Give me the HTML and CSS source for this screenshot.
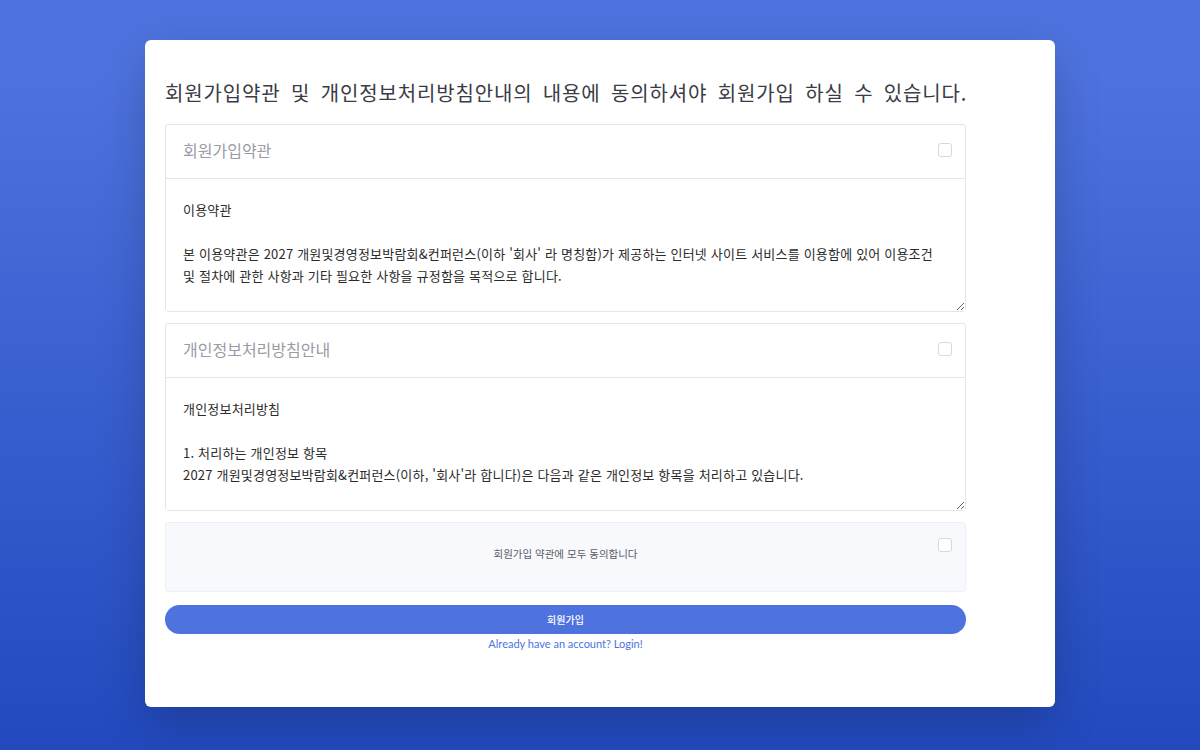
FILE: index.html
```html
<!DOCTYPE html>
<html lang="ko">
<head>
    <meta charset="UTF-8">
    <meta name="viewport" content="width=device-width, initial-scale=1.0">
    <title>회원가입</title>
    <link rel="stylesheet" href="styles.css">
</head>
<body>
    <div class="card">
        <div class="content">
            <h1 class="title">회원가입약관 및 개인정보처리방침안내의 내용에 동의하셔야 회원가입 하실 수 있습니다.</h1>

            <!-- 회원가입약관 -->
            <div class="terms">
                <div class="terms-head">
                    <span>회원가입약관</span>
                    <input type="checkbox" class="check">
                </div>
                <textarea class="terms-body" readonly>이용약관

본 이용약관은 2027 개원및경영정보박람회&amp;컨퍼런스(이하 '회사' 라 명칭함)가 제공하는 인터넷 사이트 서비스를 이용함에 있어 이용조건
및 절차에 관한 사항과 기타 필요한 사항을 규정함을 목적으로 합니다.</textarea>
            </div>

            <!-- 개인정보처리방침안내 -->
            <div class="terms">
                <div class="terms-head">
                    <span>개인정보처리방침안내</span>
                    <input type="checkbox" class="check">
                </div>
                <textarea class="terms-body" readonly>개인정보처리방침

1. 처리하는 개인정보 항목
2027 개원및경영정보박람회&amp;컨퍼런스(이하, '회사'라 합니다)은 다음과 같은 개인정보 항목을 처리하고 있습니다.</textarea>
            </div>

            <div class="agree">
                <span class="agree-text">회원가입 약관에 모두 동의합니다</span>
                <input type="checkbox" class="check">
            </div>

            <button type="button" class="btn-join">회원가입</button>
            <div class="login-link"><a href="#">Already have an account? Login!</a></div>
        </div>
    </div>
</body>
</html>
```

FILE: styles.css
```css
body{
    margin: 0;
    min-height: 750px;
    background: linear-gradient(180deg, #4e73df 10%, #224abe 100%);
    font-family: Lato, "Noto Sans CJK KR", sans-serif;
}
.card{
    width: 910px;
    height: 667px;
    box-sizing: border-box;
    margin: 40px auto 0;
    padding: 41px 20px 0;
    background-color: #fff;
    border-radius: 6px;
    box-shadow: 0 16px 48px rgba(0, 0, 0, .2);
}
.content{
    width: 801px;
}
.title{
    margin: 0 0 19px;
    font-family: "Noto Sans CJK KR", sans-serif;
    font-size: 20px;
    font-weight: 400;
    line-height: 24px;
    letter-spacing: 0.85px;
    word-spacing: 4px;
    color: #3a3b45;
    white-space: nowrap;
}
.terms{
    border: 1px solid #e3e6f0;
    border-radius: 3px;
    margin-bottom: 11px;
}
.terms-head{
    display: flex;
    justify-content: space-between;
    align-items: center;
    height: 50px;
    padding: 0 13px 3px 17px;
    border-bottom: 1px solid #e3e6f0;
    font-family: "Noto Sans CJK KR", sans-serif;
    font-size: 16px;
    color: #9a9ba6;
}
.terms-body{
    display: block;
    width: 100%;
    height: 132px;
    box-sizing: border-box;
    margin: 0;
    padding: 20px 17px 0;
    border: none;
    outline: none;
    resize: vertical;
    font-family: "Noto Sans CJK KR", sans-serif;
    font-size: 13px;
    line-height: 22px;
    letter-spacing: 0.2px;
    color: #2b2b2b;
    background: #fff;
    overflow: hidden;
}
.check{
    appearance: none;
    -webkit-appearance: none;
    width: 14px;
    height: 14px;
    margin: 0;
    border: 1px solid #d6d8e1;
    border-radius: 3px;
    background: #fff;
    flex-shrink: 0;
}
.agree{
    display: flex;
    align-items: flex-start;
    height: 70px;
    box-sizing: border-box;
    padding: 15px 13px 0 27px;
    border: 1px solid #eef0f5;
    border-radius: 3px;
    background-color: #f8f9fc;
}
.agree-text{
    flex: 1;
    padding-top: 9px;
    text-align: center;
    font-family: "Noto Sans CJK KR", sans-serif;
    font-size: 10.5px;
    line-height: 14px;
    color: #5a5c69;
}
.btn-join{
    display: block;
    width: 100%;
    height: 29px;
    margin-top: 13px;
    border: none;
    border-radius: 15px;
    background-color: #4e73df;
    color: #fff;
    font-family: "Noto Sans CJK KR", sans-serif;
    font-size: 10px;
    font-weight: 500;
}
.login-link{
    margin-top: 3px;
    text-align: center;
    font-size: 11px;
    line-height: 14px;

    a{
        color: #4e73df;
        text-decoration: none;
    }
}
```
